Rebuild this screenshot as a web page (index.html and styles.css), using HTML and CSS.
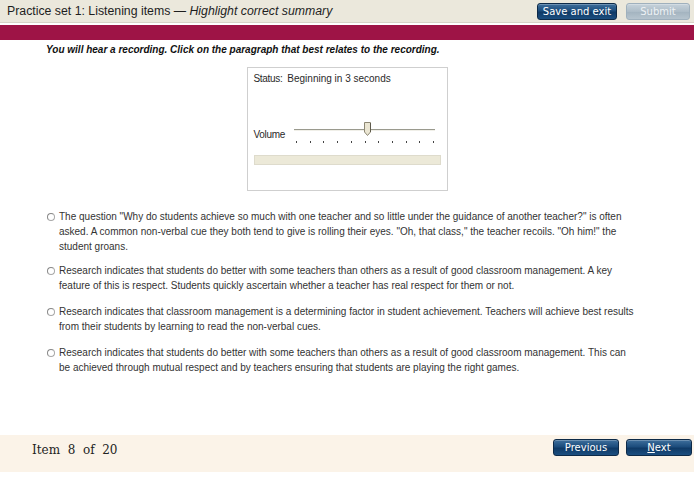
FILE: index.html
```html
<!DOCTYPE html>
<html>
<head>
<meta charset="utf-8">
<link rel="stylesheet" href="styles.css">
</head>
<body>
<div class="page">
  <header class="topbar">
    <div class="title">Practice set 1: Listening items — <em>Highlight correct summary</em></div>
    <div class="actions">
      <button class="btn save">Save and exit</button>
      <button class="btn disabled">Submit</button>
    </div>
  </header>
  <div class="band"></div>
  <p class="instruction">You will hear a recording. Click on the paragraph that best relates to the recording.</p>
  <div class="player">
    <div class="status"><span class="lbl">Status:</span> Beginning in 3 seconds</div>
    <div class="volume">
      <span class="vlabel">Volume</span>
      <div class="slider">
        <div class="track"></div>
        <svg class="thumb" width="7" height="14" viewBox="0 0 7 14"><path d="M0.5 0.5 H6.5 V10 L3.5 13.5 L0.5 10 Z" fill="#ebe6d3" stroke="#8c8774"/><path d="M6.5 1 V10" stroke="#5e5a4c"/></svg>
        <div class="ticks">
          <i></i><i></i><i></i><i></i><i></i><i></i><i></i><i></i><i></i><i></i><i></i>
        </div>
      </div>
    </div>
    <div class="progress"></div>
  </div>
  <ul class="options">
    <li><span class="radio"></span><p>The question "Why do students achieve so much with one teacher and so little under the guidance of another teacher?" is often asked. A common non-verbal cue they both tend to give is rolling their eyes. "Oh, that class," the teacher recoils. "Oh him!" the student groans.</p></li>
    <li><span class="radio"></span><p>Research indicates that students do better with some teachers than others as a result of good classroom management. A key feature of this is respect. Students quickly ascertain whether a teacher has real respect for them or not.</p></li>
    <li><span class="radio"></span><p>Research indicates that classroom management is a determining factor in student achievement. Teachers will achieve best results from their students by learning to read the non-verbal cues.</p></li>
    <li><span class="radio"></span><p>Research indicates that students do better with some teachers than others as a result of good classroom management. This can be achieved through mutual respect and by teachers ensuring that students are playing the right games.</p></li>
  </ul>
  <footer class="bottombar">
    <div class="counter">Item&nbsp; 8&nbsp; of&nbsp; 20</div>
    <div class="actions">
      <button class="btn">Previous</button>
      <button class="btn"><u>N</u>ext</button>
    </div>
  </footer>
</div>
</body>
</html>
```
FILE: styles.css
```css
* { box-sizing: border-box; }
html, body { margin: 0; padding: 0; background: #fff; }
body { width: 694px; height: 479px; overflow: hidden; font-family: "Liberation Sans", Arial, sans-serif; }
.page { display: flex; flex-direction: column; height: 479px; }

.topbar {
  height: 23px;
  background: #ebe8dc;
  border-bottom: 1px solid #d6d3c7;
  display: flex;
  align-items: center;
  justify-content: space-between;
  padding: 0 4px 0 7px;
}
.title { font-size: 12.3px; color: #1e1e1e; }
.title em { font-style: italic; }
.actions { display: flex; gap: 9px; }

.btn {
  font-family: "DejaVu Sans", Verdana, sans-serif;
  font-size: 10px;
  color: #fff;
  height: 17px;
  padding: 0;
  white-space: nowrap;
  border: 1px solid #0d2a48;
  border-radius: 3px;
  background: linear-gradient(#3e6f9c 0%, #1c4c7c 45%, #0f3a66 55%, #1b4e80 100%);
  box-shadow: inset 0 1px 0 rgba(255,255,255,0.25);
  line-height: 15px;
  text-align: center;
  cursor: pointer;
}
.btn.save { width: 80px; }
.btn.disabled {
  width: 64px;
  color: #eef2f5;
  border-color: #9fb0bd;
  background: linear-gradient(#c6d2db 0%, #aebdc8 50%, #a4b4c0 55%, #b6c4ce 100%);
}

.band {
  height: 15px;
  margin-top: 2px;
  background: #9e1446;
}

.instruction {
  margin: 4px 0 0 46px;
  font-size: 10px;
  font-weight: bold;
  font-style: italic;
  color: #111;
  line-height: 12px;
}

.player {
  align-self: center;
  width: 201px;
  height: 124px;
  margin: 11px 0 0 0;
  border: 1px solid #cfcfcf;
  padding: 5px 6px 0 6px;
  font-size: 10px;
  color: #2a2a2a;
  display: flex;
  flex-direction: column;
}
.status .lbl { letter-spacing: -0.3px; margin-right: 2px; }
.volume {
  margin-top: 45px;
  display: flex;
  align-items: flex-start;
  gap: 9px;
}
.vlabel { letter-spacing: -0.3px; }
.slider { position: relative; width: 141px; height: 15px; margin-top: -3px; }
.track {
  position: absolute;
  left: 0; right: 0; top: 3px;
  height: 2px;
  border-top: 1px solid #9a9a8e;
  border-bottom: 1px solid #f0efe8;
}
.thumb {
  position: absolute;
  left: 70px; top: -4px;
}
.ticks {
  position: absolute;
  left: 2px; right: 1px; top: 15px;
  display: flex;
  justify-content: space-between;
}
.ticks i { display: block; width: 1px; height: 2px; background: #444; }
.progress {
  margin-top: 14px;
  height: 10px;
  background: #ece9d8;
  border: 1px solid #dedbcc;
}

.options {
  list-style: none;
  margin: 18px 0 0 0;
  padding: 0 0 0 47px;
}
.options li {
  display: flex;
  align-items: flex-start;
  margin-bottom: 11px;
}
.options li:first-child { margin-bottom: 9px; }
.radio {
  flex: none;
  width: 8px; height: 8px;
  margin-top: 4px;
  margin-right: 4px;
  border-radius: 50%;
  border: 1px solid #a8a8a8;
  border-left-color: #888;
  border-top-color: #888;
  background: #fff;
}
.options p {
  margin: 0;
  width: 580px;
  font-size: 10px;
  line-height: 15px;
  color: #333;
}

.bottombar {
  margin-top: auto;
  margin-bottom: 7px;
  height: 37px;
  background: #fbf3e8;
  display: flex;
  align-items: flex-start;
  justify-content: space-between;
  padding: 4px 2px 0 32px;
}
.counter {
  font-family: "DejaVu Serif", Georgia, serif;
  font-size: 12px;
  color: #222;
  margin-top: 4px;
}
.bottombar .actions { gap: 7px; }
.bottombar .btn { width: 66px; }
```
